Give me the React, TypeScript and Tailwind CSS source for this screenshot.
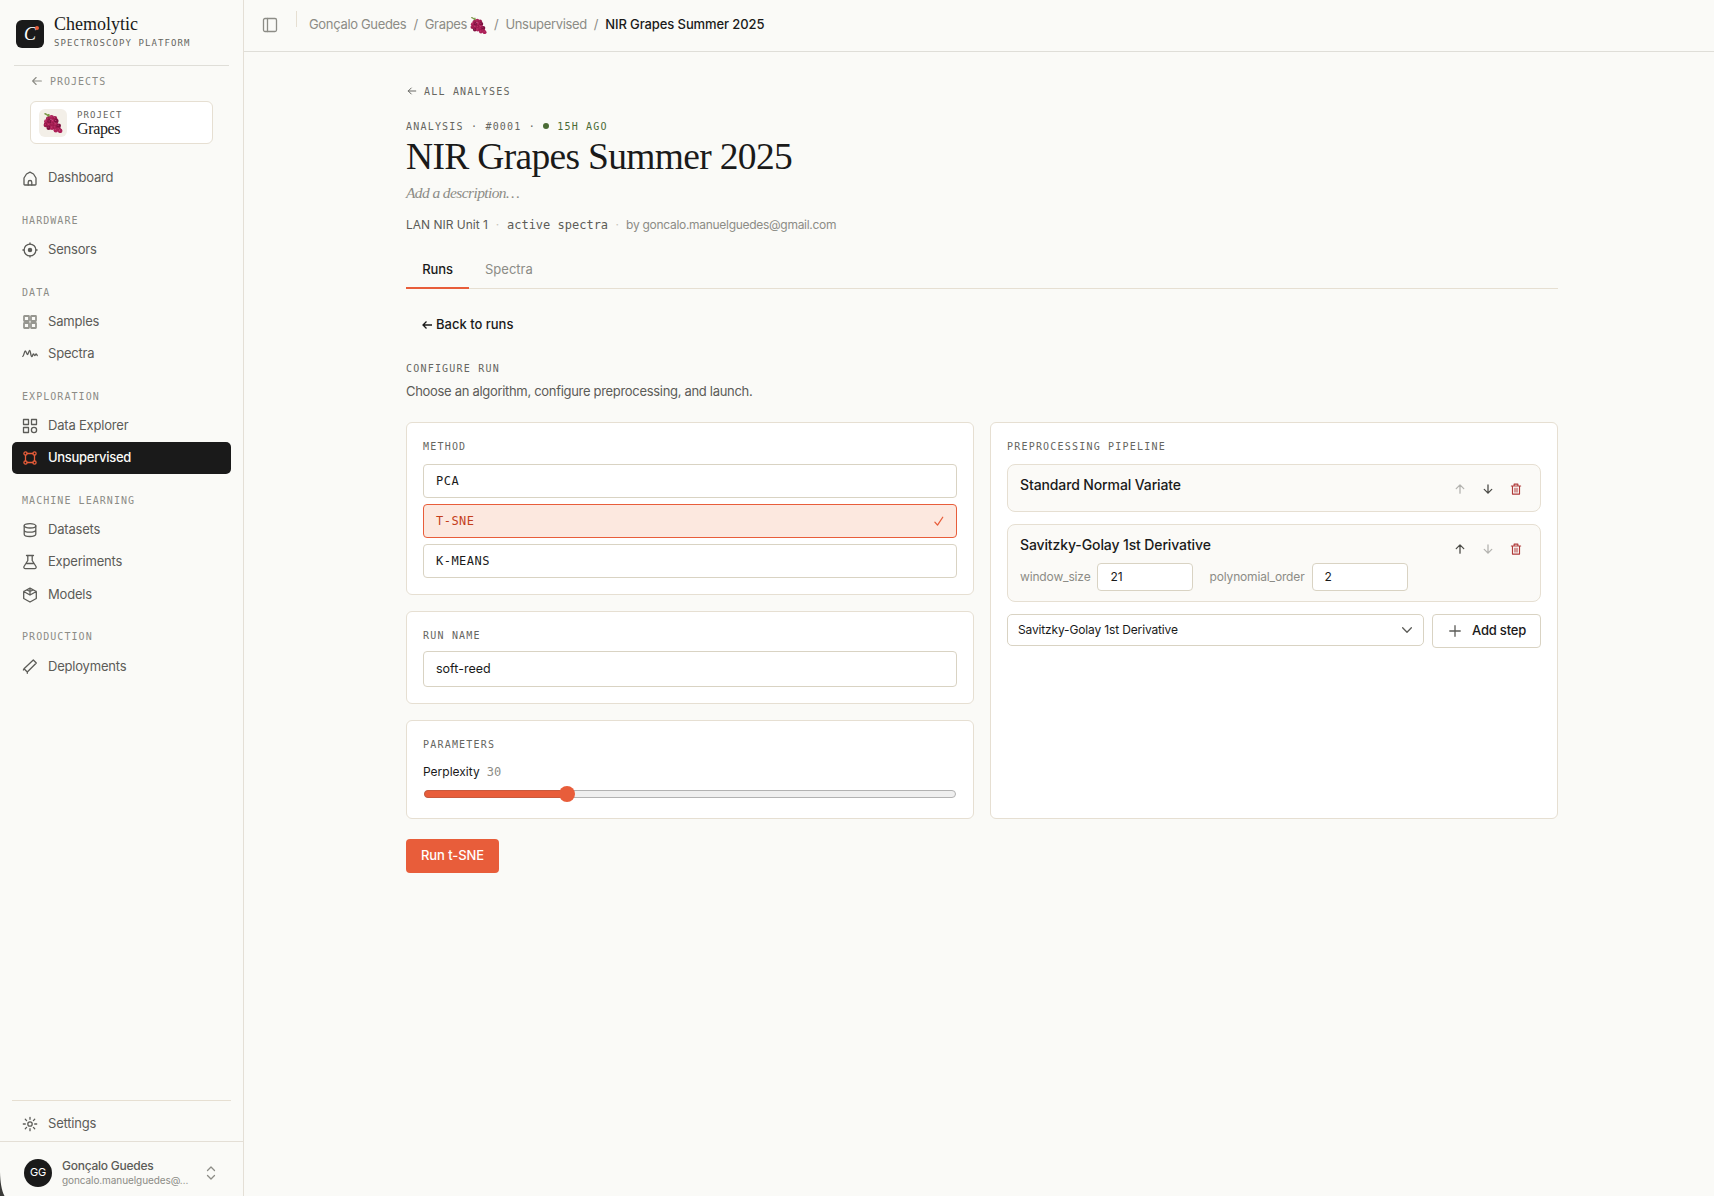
import { FC, ReactNode } from "react";
import { clsx as cx } from "clsx";

const sans = "font-['Inter','Liberation_Sans',sans-serif]";
const mono = "font-['DejaVu_Sans_Mono','Liberation_Mono',monospace]";
const serif = "font-['Liberation_Serif',serif]";

const Svg: FC<{ children: ReactNode; className?: string; sw?: number }> = ({
  children,
  className,
  sw = 1.3,
}) => (
  <svg
    viewBox="0 0 16 16"
    fill="none"
    stroke="currentColor"
    strokeWidth={sw}
    strokeLinecap="round"
    strokeLinejoin="round"
    className={cx("shrink-0", className || "size-4")}
  >
    {children}
  </svg>
);

const berries = [
  [8, 8, 0], [11.5, 6.5, 1], [15, 7.5, 0], [6, 11, 1], [9.5, 11, 2],
  [13, 10.5, 1], [16.5, 10.5, 2], [5.5, 14.5, 0], [9, 14.5, 1], [12.5, 14, 0],
  [16, 14, 1], [8.5, 17.5, 2], [12, 17.5, 1], [15.5, 17.3, 0], [19, 15.5, 2],
  [19, 19, 0], [16, 20, 1], [20.5, 20.7, 1],
];
const berryFill = ["#9c1a4c", "#ad2159", "#7d1140"];

const Grapes: FC<{ className?: string }> = ({ className }) => (
  <svg viewBox="2.5 2 21 21" className={cx("shrink-0", className)}>
    <path
      d="M4 2.500c2 .3 4 2 5.500 4.500M8.500 3c0 1.500.5 3 1.500 4"
      stroke="#7d9a4a"
      strokeWidth="1.500"
      fill="none"
    />
    {berries.map(([x, y, c], i) => (
      <g key={i}>
        <circle cx={x} cy={y} r="2.400" fill={berryFill[c]} />
        <circle cx={x - 0.6} cy={y - 0.7} r=".6" fill="#c9477c" />
      </g>
    ))}
  </svg>
);

const icons: Record<string, ReactNode> = {
  home: (
    <Svg>
      <path d="M2 8 4.500 4 8 2.200 11.500 4 14 8v6.200a.8.8 0 0 1-.8.8H2.800a.8.8 0 0 1-.8-.8z" />
      <path d="M6.200 15v-2.700a1.800 1.800 0 0 1 3.600 0V15" />
    </Svg>
  ),
  sensor: (
    <Svg>
      <circle cx="8" cy="8" r="5.900" />
      <circle cx="8" cy="8" r="1.600" fill="currentColor" />
      <path d="M8 .9v1.200M8 13.900v1.200M.9 8h1.200M13.900 8h1.200" />
    </Svg>
  ),
  samples: (
    <Svg sw={1.800} className="size-4 text-[#969690]">
      <rect x="2" y="2" width="5" height="5" rx=".4" />
      <rect x="9" y="2" width="5" height="5" rx=".4" />
      <rect x="2" y="9" width="5" height="5" rx=".4" />
      <rect x="9" y="9" width="5" height="5" rx=".4" />
    </Svg>
  ),
  spectra: (
    <Svg>
      <path d="M.8 10.300C2 10 2.300 5 3.300 5S4.800 8.700 5.500 8.700 6.800 4.300 7.700 4.300s1 6.300 2 6.300.9-2.600 1.700-2.600.7 1.600 1.300 1.600.9-1.600 1.400-1.600.8.8 1.100 1.600" />
    </Svg>
  ),
  explorer: (
    <Svg>
      <rect x="1.500" y="1.500" width="5" height="5" />
      <rect x="9.500" y="1.500" width="5" height="5" />
      <rect x="1.500" y="9.500" width="5" height="5" />
      <circle cx="12" cy="12" r="2.600" />
    </Svg>
  ),
  unsupervised: (
    <Svg>
      <circle cx="3.500" cy="3.500" r="1.600" />
      <circle cx="12.500" cy="3.500" r="1.600" />
      <circle cx="3.500" cy="12.500" r="1.600" />
      <circle cx="12.500" cy="12.500" r="1.600" />
      <path d="M5.100 3.500h5.800M5.100 12.500h5.800M3.500 5.100v5.800M12.500 5.100v5.800" />
    </Svg>
  ),
  datasets: (
    <Svg>
      <ellipse cx="8" cy="3.800" rx="5.800" ry="2.200" />
      <path d="M2.200 3.800v8.500c0 1.200 2.600 2.200 5.800 2.200s5.800-1 5.800-2.200V3.800M2.200 8c0 1.200 2.600 2.200 5.800 2.200s5.800-1 5.800-2.200" />
    </Svg>
  ),
  flask: (
    <Svg>
      <path d="M4.500 1.500h7M5.800 1.500v5L2 12.500a1.500 1.500 0 0 0 1.300 2.200h9.400a1.500 1.500 0 0 0 1.300-2.200l-3.800-6v-5M4 9.500h8" />
    </Svg>
  ),
  cube: (
    <Svg>
      <path d="M8 1.200 14.300 4.500v7L8 15l-6.300-3.500v-7zM1.700 4.500 8 8l6.300-3.500M8 1.200V8M5 3l3 1.500L11 3" />
    </Svg>
  ),
  deploy: (
    <Svg>
      <path d="m11.300 2 3 3-9 9-3.300-3.300zM5.300 14v1.300M2 10.700l-.6 1.300" />
    </Svg>
  ),
  settings: (
    <Svg>
      <circle cx="8" cy="8" r="2.200" />
      <path d="M8 1.300v2M8 12.700v2M1.300 8h2M12.700 8h2M3.300 3.300l1.300 1.300M11.400 11.400l1.300 1.300M12.700 3.300l-1.300 1.300M4.600 11.400l-1.300 1.300" />
    </Svg>
  ),
};

const groups = [
  {
    label: "HARDWARE",
    items: [{ icon: "sensor", name: "Sensors" }],
  },
  {
    label: "DATA",
    items: [
      { icon: "samples", name: "Samples" },
      { icon: "spectra", name: "Spectra" },
    ],
  },
  {
    label: "EXPLORATION",
    items: [
      { icon: "explorer", name: "Data Explorer" },
      { icon: "unsupervised", name: "Unsupervised", active: true },
    ],
  },
  {
    label: "MACHINE LEARNING",
    items: [
      { icon: "datasets", name: "Datasets" },
      { icon: "flask", name: "Experiments" },
      { icon: "cube", name: "Models" },
    ],
  },
  {
    label: "PRODUCTION",
    items: [{ icon: "deploy", name: "Deployments" }],
  },
];

const NavItem: FC<{ icon: string; name: string; active?: boolean }> = ({
  icon,
  name,
  active,
}) => (
  <a
    className={cx(
      "flex h-[32.3px] items-center gap-[10px] rounded-[5px] pl-[10px] text-[13px]",
      active
        ? "bg-[#1a1a1a] font-medium tracking-[-0.3px] text-[#fafaf7]"
        : "tracking-[-0.2px] text-[#5c5c58]"
    )}
  >
    <span className={cx("flex", active && "text-[#e85d3a]")}>
      {icons[icon]}
    </span>
    <span>{name}</span>
  </a>
);

const Sidebar = () => (
  <aside className="flex h-full w-[244px] shrink-0 flex-col border-r border-[#e4dfd6]">
    <div className="mx-[14px] flex h-[66px] items-start gap-[10px] border-b border-[#dfded8] pl-[2px]">
      <div className="relative mt-5 flex size-7 items-center justify-center rounded-md bg-[#1a1a1a]">
        <span className={cx(serif, "text-[18px] leading-7 text-white italic")}>
          C
        </span>
        <i className="absolute top-[6px] right-[5px] size-1 rounded-full bg-[#e85d3a]" />
      </div>
      <div className="flex flex-col pt-[13px]">
        <span className={cx(serif, "text-[18px] leading-[22px] text-[#1a1a1a]")}>
          Chemolytic
        </span>
        <span className={cx(mono, "mt-px text-[9px] leading-[14px] tracking-[0.12em] text-[#666661]")}>
          SPECTROSCOPY PLATFORM
        </span>
      </div>
    </div>

    <div className={cx(mono, "mt-[7px] ml-[30px] flex h-4 items-center gap-[6px] text-[10px] tracking-[0.1em] text-[#8c8c86]")}>
      <Svg className="size-[14px]">
        <path d="M13 8H3M7 4 3 8l4 4" />
      </Svg>
      <span>PROJECTS</span>
    </div>

    <div className="mt-3 ml-[30px] flex h-[43px] w-[183px] items-center gap-[10px] rounded-md border border-[#e6dfd2] bg-white pl-2">
      <div className="flex size-7 items-center justify-center rounded-md bg-[#f3efe8]">
        <Grapes className="size-5" />
      </div>
      <div className="flex flex-col pb-px">
        <span className={cx(mono, "text-[9px] leading-[12px] tracking-[0.12em] text-[#666661]")}>
          PROJECT
        </span>
        <span className={cx(serif, "text-[16px] leading-[15px] tracking-[-0.35px] text-[#1a1a1a]")}>
          Grapes
        </span>
      </div>
    </div>

    <nav className="mt-[18px] flex flex-col px-3">
      <NavItem icon="home" name="Dashboard" />
      {groups.map((g) => (
        <div key={g.label} className="flex flex-col">
          <div className={cx(mono, "flex h-[39.5px] items-center pt-[13px] pl-[10px] text-[10px] tracking-[0.105em] text-[#8c8c86]")}>
            {g.label}
          </div>
          {g.items.map((e) => (
            <NavItem key={e.name} {...e} />
          ))}
        </div>
      ))}
    </nav>

    <div className="mx-3 mt-auto flex h-[41px] flex-col border-t border-[#e6dfd2] pt-[7px]">
      <NavItem icon="settings" name="Settings" />
    </div>
    <div className="flex h-[55px] items-center border-t border-[#e4dfd6] pt-[7px] pl-6">
      <div className="flex size-7 items-center justify-center rounded-full bg-[#1a1a1a] text-[11px] tracking-[-0.3px] text-white">
        GG
      </div>
      <div className="ml-[10px] flex w-[130px] flex-col">
        <span className="text-[12px] leading-[15px] font-medium tracking-[-0.25px] text-[#5c5c58]">
          Gonçalo Guedes
        </span>
        <span className="text-[10px] leading-[14px] tracking-[-0.08px] whitespace-nowrap text-[#8c8c86]">
          goncalo.manuelguedes@…
        </span>
      </div>
      <Svg className="ml-[11px] size-4 text-[#8c8c86]">
        <path d="m4.500 5.500 3.500-3.500 3.500 3.500M4.500 10.500 8 14l3.500-3.500" />
      </Svg>
    </div>
  </aside>
);

const Header = () => (
  <header className="flex h-[52px] shrink-0 items-center border-b border-[#dfded8] pb-px pl-[18px] text-[13px] text-[#8c8c86]">
    <Svg className="size-4">
      <rect x="1.500" y="1.500" width="13" height="13" rx="1.500" />
      <path d="M5.500 1.500v13" />
    </Svg>
    <div className="mb-3 ml-[18px] h-4 w-px bg-[#e6dfd2]" />
    <div className="ml-3 flex items-center gap-[7px] tracking-[-0.33px]">
      <span>Gonçalo Guedes</span>
      <span>/</span>
      <span className="flex items-center gap-[3px]">
        <span>Grapes</span>
        <Grapes className="size-[17px]" />
      </span>
      <span>/</span>
      <span>Unsupervised</span>
      <span>/</span>
      <span className="font-medium tracking-[-0.1px] text-[#1a1a1a]">
        NIR Grapes Summer 2025
      </span>
    </div>
  </header>
);

const Card: FC<{ label: string; className?: string; children: ReactNode }> = ({
  label,
  className,
  children,
}) => (
  <section className={cx("rounded-md border border-[#e6dfd2] bg-white px-4 pt-[17px] pb-4", className)}>
    <h3 className={cx(mono, "text-[10px] leading-[14px] tracking-[0.12em] text-[#666661]")}>
      {label}
    </h3>
    {children}
  </section>
);

const methods = ["PCA", "T-SNE", "K-MEANS"];

const MethodCard = () => (
  <Card label="METHOD">
    <div className="mt-[10px] flex flex-col gap-[6px]">
      {methods.map((m) => {
        const on = m === "T-SNE";
        return (
          <button
            key={m}
            className={cx(
              mono,
              "flex h-[34px] items-center justify-between rounded-[4px] border pr-[11px] pl-3 text-[12px] tracking-[0.04em]",
              on
                ? "border-[#e85d3a] bg-[#fce8df] text-[#c43e1c]"
                : "border-[#d9d3c3] bg-white text-[#1a1a1a]"
            )}
          >
            <span>{m}</span>
            {on && (
              <Svg className="size-3 text-[#e85d3a]" sw={1.700}>
                <path d="m2.500 9.500 3.500 4L13 3" />
              </Svg>
            )}
          </button>
        );
      })}
    </div>
  </Card>
);

const ParamsCard = () => (
  <Card label="PARAMETERS" className="h-[99px]">
    <div className="mt-[11px] flex items-center gap-[7px] leading-[18px]">
      <span className="text-[12px] text-[#1a1a1a]">Perplexity</span>
      <span className={cx(mono, "text-[12px] text-[#8c8c86]")}>30</span>
    </div>
    <div className="relative mx-px mt-[9px] h-2 rounded-full border border-[#b2b2b2] bg-[#efefef]">
      <div className="absolute -top-px -left-px h-2 w-[144px] rounded-full border border-[#c9593c] bg-[#e85d3a]" />
      <div className="absolute -top-[5px] left-[134px] size-4 rounded-full bg-[#e85d3a]" />
    </div>
  </Card>
);

const Param: FC<{ name: string; value: string }> = ({ name, value }) => (
  <label className="flex items-center gap-[7px] text-[12px] text-[#8c8c86]">
    <span className="tracking-[-0.15px]">{name}</span>
    <span className="flex h-7 w-24 items-center rounded-[4px] border border-[#d9d3c3] bg-white pl-3 text-[#1a1a1a]">
      {value}
    </span>
  </label>
);

const steps = [
  { name: "Standard Normal Variate", params: [] },
  {
    name: "Savitzky-Golay 1st Derivative",
    params: [
      { name: "window_size", value: "21" },
      { name: "polynomial_order", value: "2" },
    ],
  },
];

const PipelineCard = () => (
  <Card label="PREPROCESSING PIPELINE">
    <div className="mt-[10px] flex flex-col gap-3">
      {steps.map((s, i) => (
        <div
          key={s.name}
          className={cx(
            "flex justify-between rounded-lg border border-[#e6dfd2] bg-[#fbfaf7] pr-[10px] pl-3",
            s.params.length ? "h-[78px]" : "h-12"
          )}
        >
          <div className="pt-[10px]">
            <div className="text-[14px] leading-5 font-medium tracking-[-0.12px] text-[#1a1a1a]">
              {s.name}
            </div>
            <div className="mt-2 flex gap-4">
              {s.params.map((e) => (
                <Param key={e.name} {...e} />
              ))}
            </div>
          </div>
          <div className="flex h-12 items-center pb-px text-[#4a4a46]">
            <span className={cx("flex w-7 justify-center", i === 0 && "opacity-40")}>
              <Svg className="size-3" sw={1.700}>
                <path d="M8 13.500v-11M3 7.500l5-5 5 5" />
              </Svg>
            </span>
            <span className={cx("flex w-7 justify-center", i === 1 && "opacity-40")}>
              <Svg className="size-3" sw={1.700}>
                <path d="M8 2.500v11M3 8.500l5 5 5-5" />
              </Svg>
            </span>
            <span className="flex w-7 justify-center text-[#b03a3a]">
              <Svg className="size-3" sw={1.500}>
                <path d="M1.800 4h12.400M3.300 4v10.800h9.400V4M5.500 4V1.500h5V4" />
                <path d="M6 7h4v5H6z" fill="currentColor" opacity=".5" />
              </Svg>
            </span>
          </div>
        </div>
      ))}
      <div className="flex items-start gap-2">
        <div className="flex h-8 flex-1 items-center justify-between rounded-[5px] border border-[#d9d3c3] pr-[9px] pl-[10px] text-[12px] tracking-[-0.15px] text-[#1a1a1a]">
          <span>Savitzky-Golay 1st Derivative</span>
          <Svg className="size-[14px] text-[#5c5c58]" sw={1.500}>
            <path d="m3 5.500 5 5 5-5" />
          </Svg>
        </div>
        <button className="flex h-[34px] w-[109px] items-center rounded-[4px] border border-[#d9d3c3] pl-[15px] text-[13px] font-medium tracking-[-0.2px] text-[#1a1a1a]">
          <Svg className="mr-[10px] size-[14px] text-[#5c5c58]" sw={1.500}>
            <path d="M8 2v12M2 8h12" />
          </Svg>
          <span>Add step</span>
        </button>
      </div>
    </div>
  </Card>
);

export default function App() {
  return (
    <div className={cx(sans, "relative flex h-[1196px] w-[1714px] overflow-hidden bg-[#fafaf7] text-[#1a1a1a]")}>
      <Sidebar />
      <div className="flex min-w-0 flex-1 flex-col">
        <Header />
        <main className="ml-[162px] flex w-[1152px] flex-col pt-[31px]">
          <div className={cx(mono, "flex h-4 items-center gap-[6px] text-[10px] tracking-[0.12em] text-[#666661]")}>
            <Svg className="size-3">
              <path d="M13 8H3M7 4 3 8l4 4" />
            </Svg>
            <span>ALL ANALYSES</span>
          </div>

          <div className={cx(mono, "mt-[19px] flex h-4 items-center text-[10px] tracking-[0.12em] whitespace-pre text-[#666661]")}>
            <span>ANALYSIS · #0001 · </span>
            <i className="mr-[8px] size-[6px] rounded-full bg-[#4a6b35]" />
            <span className="text-[#4a6b35]">15H AGO</span>
          </div>
          <h1 className={cx(serif, "mt-px text-[37.5px] leading-[43px] tracking-[-0.68px]")}>
            NIR Grapes Summer 2025
          </h1>
          <p className={cx(serif, "mt-[5px] text-[15.5px] leading-5 tracking-[-0.6px] text-[#8c8c86] italic")}>
            Add a description…
          </p>
          <div className="mt-[13px] flex h-[18px] items-center text-[12px] text-[#5c5c58]">
            <span>LAN NIR Unit 1</span>
            <span className="w-[19px] text-center text-[#c9c6bd]">·</span>
            <span className={mono}>active spectra</span>
            <span className="w-[18px] text-center text-[#c9c6bd]">·</span>
            <span className="tracking-[-0.29px] text-[#8c8c86]">
              by goncalo.manuelguedes@gmail.com
            </span>
          </div>

          <div className="mt-4 flex h-[39px] border-b border-[#e6dfd2] text-[13px]">
            <div className="-mb-px flex w-[63px] items-center justify-center border-b-2 border-[#e85d3a] pt-[3px] font-medium tracking-[-0.1px]">
              Runs
            </div>
            <div className="flex items-center pt-[2px] pl-4 text-[#8c8c86]">
              Spectra
            </div>
          </div>

          <div className="mt-[26px] ml-4 flex h-5 items-center gap-1 text-[13px] font-medium">
            <svg viewBox="0 0 10 10" className="size-[10px]" fill="none" stroke="currentColor" strokeWidth="1.300">
              <path d="M10 5H1M4.500 1.500 1 5l3.500 3.500" />
            </svg>
            <span>Back to runs</span>
          </div>

          <h2 className={cx(mono, "mt-[26px] h-4 text-[10px] leading-4 tracking-[0.12em] text-[#666661]")}>
            CONFIGURE RUN
          </h2>
          <p className="mt-1 text-[13px] leading-5 tracking-[-0.31px] text-[#5c5c58]">
            Choose an algorithm, configure preprocessing, and launch.
          </p>

          <div className="mt-[21px] grid grid-cols-2 gap-4">
            <div className="flex flex-col gap-4">
              <MethodCard />
              <Card label="RUN NAME" className="h-[93px]">
                <div className="mt-[8px] flex h-9 items-center rounded-[4px] border border-[#d9d3c3] px-3 text-[12.5px]">
                  soft-reed
                </div>
              </Card>
              <ParamsCard />
            </div>
            <PipelineCard />
          </div>

          <button className="mt-5 flex h-[34px] w-[93px] items-center justify-center rounded-[4px] bg-[#e85d3a] text-[13px] font-medium tracking-[-0.1px] text-white">
            Run t-SNE
          </button>
        </main>
      </div>
      {/* rounded window edge */}
      <svg viewBox="0 0 5 26" className="absolute bottom-0 left-0 h-[26px] w-[5px]">
        <path d="M0 2C.3 12 1.500 20 4.500 26H0z" fill="#3a3a38" />
      </svg>
    </div>
  );
}
